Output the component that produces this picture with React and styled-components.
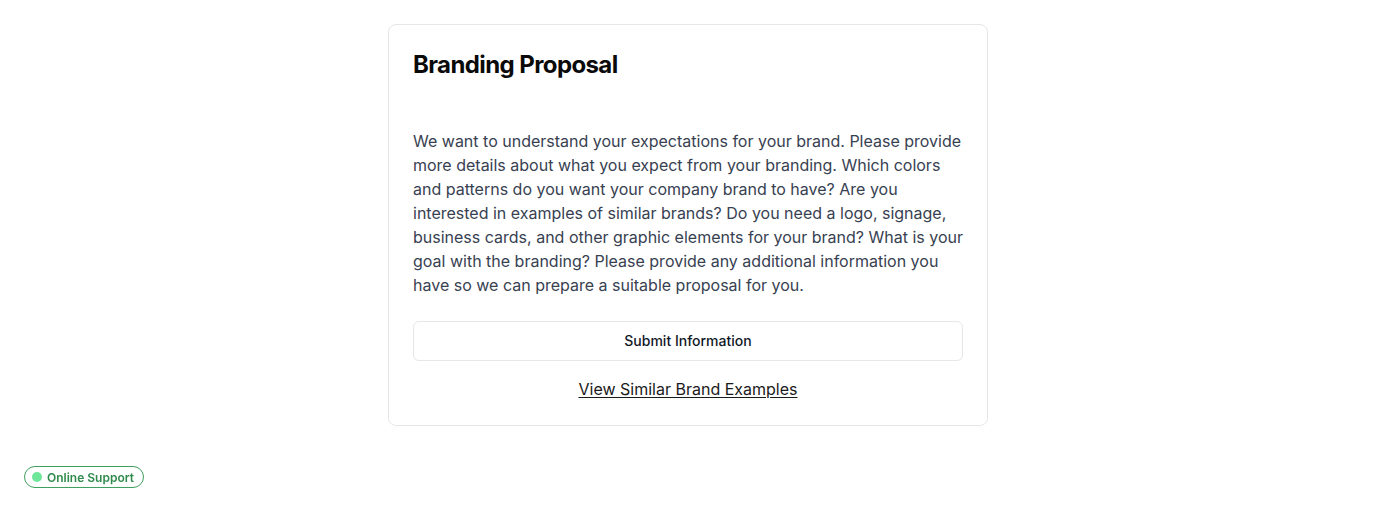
import React from "react";
import styled, { createGlobalStyle } from "styled-components";

const Global = createGlobalStyle`
  * { box-sizing: border-box; }
  body {
    margin: 0;
    background: #ffffff;
    font-family: Inter, "Noto Sans", sans-serif;
    color: #111827;
  }
`;

const Page = styled.main`
  display: flex;
  justify-content: center;
  padding-top: 24px;
`;

const Card = styled.section`
  width: 600px;
  border: 1px solid #e5e7eb;
  border-radius: 8px;
  background: #fff;
  padding: 24px;
  display: flex;
  flex-direction: column;
`;

const Title = styled.h2`
  margin: 0 0 48px;
  font-size: 24px;
  line-height: 32px;
  font-weight: 700;
  color: #0a0a0a;
  letter-spacing: -0.6px;
`;

const Body = styled.p`
  margin: 0 -4px 24px 0;
  font-size: 16px;
  line-height: 24px;
  color: #374151;
`;

const Button = styled.button`
  height: 40px;
  width: 100%;
  border: 1px solid #e5e7eb;
  border-radius: 6px;
  background: #fff;
  padding: 0 0 2px;
  font-family: Inter, sans-serif;
  font-size: 14px;
  font-weight: 500;
  color: #111827;
  cursor: pointer;
`;

const LinkRow = styled.div`
  margin-top: 16px;
  text-align: center;
  line-height: 24px;
`;

const Link = styled.a`
  font-size: 16px;
  color: #1a1a1a;
  text-decoration: underline;
  text-underline-offset: 2px;
  cursor: pointer;
`;

const Badge = styled.div`
  position: fixed;
  left: 24px;
  bottom: 26px;
  display: inline-flex;
  align-items: center;
  gap: 5px;
  height: 22px;
  padding: 0 9px 0 7px;
  border: 1px solid #3f9f5f;
  border-radius: 999px;
  background: #fff;
  font-size: 12px;
  font-weight: 600;
  color: #2f8a4c;
`;

const Dot = styled.span`
  width: 10px;
  height: 10px;
  border-radius: 50%;
  background: #6ee79a;
`;

export default function App() {
  return (
    <>
      <Global />
      <Page>
        <Card>
          <Title>Branding Proposal</Title>
          <Body>
            We want to understand your expectations for your brand. Please provide more details about what you expect from your branding. Which colors and patterns do you want your company brand to have? Are you interested in examples of similar brands? Do you need a logo, signage, business cards, and other graphic elements for your brand? What is your goal with the branding? Please provide any additional information you have so we can prepare a suitable proposal for you.
          </Body>
          <Button type="button">Submit Information</Button>
          <LinkRow>
            <Link>View Similar Brand Examples</Link>
          </LinkRow>
        </Card>
      </Page>
      <Badge>
        <Dot />
        Online Support
      </Badge>
    </>
  );
}
